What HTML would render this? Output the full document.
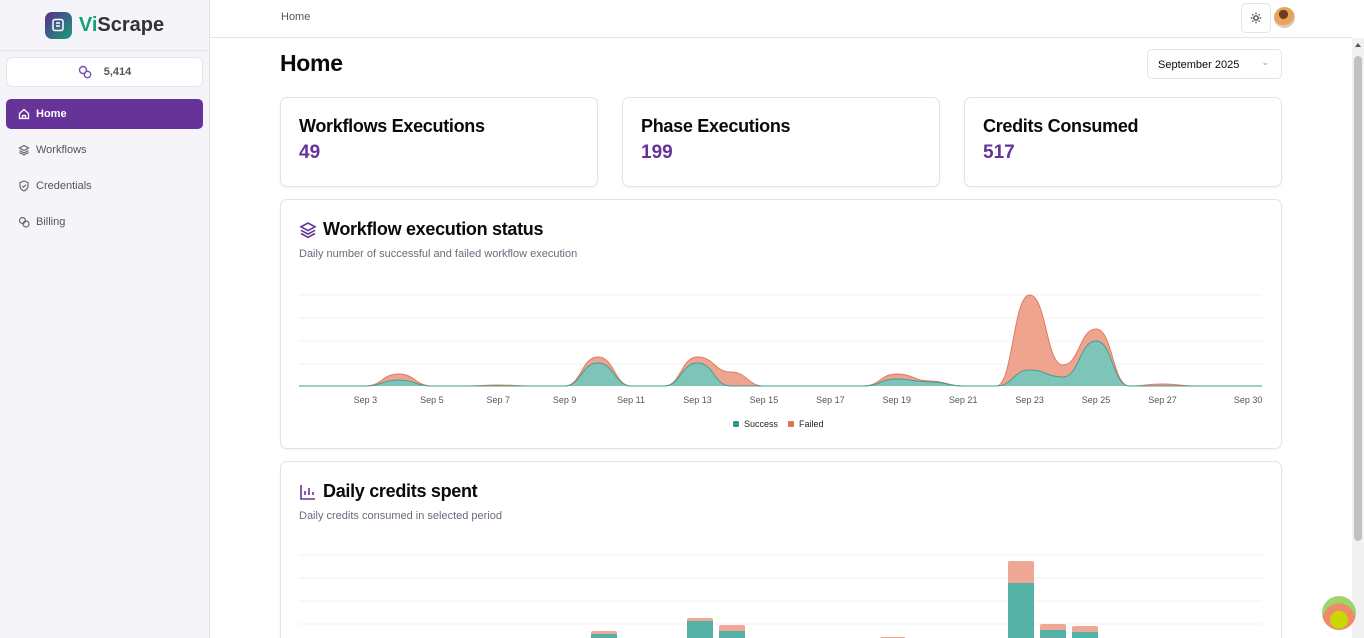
<!DOCTYPE html>
<html><head><meta charset="utf-8"><style>
*{box-sizing:border-box;margin:0;padding:0}
html,body{width:1364px;height:638px;overflow:hidden}
body{font-family:"Liberation Sans",sans-serif;background:#fff;position:relative;color:#0a0a0a}
.side{position:absolute;left:0;top:0;width:210px;height:638px;background:#f5f4f8;border-right:1px solid #e4e4e7}
.logo{height:51px;border-bottom:1px solid #e4e4e7;display:flex;align-items:center;justify-content:center;gap:7px}
.lbox{width:27px;height:27px;border-radius:7px;background:linear-gradient(135deg,#5b2c8f,#16a07a);display:flex;align-items:center;justify-content:center}
.ltxt{font-size:20px;font-weight:700;color:#333}.ltxt b{color:#16a07a}
.cred{margin:6px 6px 0 6px;height:30px;border:1px solid #e4e4e7;border-radius:6px;background:#fff;display:flex;align-items:center;justify-content:center;gap:12px;font-size:11px;font-weight:700;color:#555}
.nav{margin:12px 6px 0;height:30px;border-radius:5px;display:flex;align-items:center;padding-left:12px;gap:6px;font-size:11px;color:#555}
.nav.act{background:#663399;color:#fff;font-weight:700}
.hdr{position:absolute;left:210px;top:0;right:12px;height:38px;border-bottom:1px solid #e4e4e7}
.card{position:absolute;border:1px solid #e4e4e7;border-radius:7px;background:#fff;box-shadow:0 1px 2px rgba(0,0,0,.05)}
.st h3{font-size:18px;font-weight:700;margin:18px 0 0 18px;letter-spacing:-.3px}
.st div{font-size:19px;font-weight:700;color:#663399;margin:5px 0 0 18px}
.ct h2{font-size:18px;font-weight:700;margin:19px 0 0 18px;display:flex;align-items:center;gap:6px;letter-spacing:-.3px}
.ct p{font-size:11px;color:#6b6b7b;margin:8px 0 0 18px}
.sb{position:absolute;right:0;top:38px;width:12px;height:600px;background:#f1f1f1}
</style></head><body>
<div class="side">
 <div class="logo"><div class="lbox"><svg width="14" height="14" viewBox="0 0 14 14" fill="none" stroke="#fff" stroke-width="1.5"><rect x="2" y="1.5" width="10" height="11" rx="2"/><path d="M5 5h4M5 8h4"/></svg></div><div class="ltxt"><b>Vi</b>Scrape</div></div>
 <div class="cred"><svg width="14" height="14" viewBox="0 0 14 14" fill="none" stroke="#7a4fb5" stroke-width="1.4"><circle cx="5" cy="5" r="3.5"/><circle cx="9.5" cy="9.5" r="3.2"/></svg>5,414</div>
 <div class="nav act" style="margin-top:12px"><svg width="12" height="12" viewBox="0 0 12 12" fill="none" stroke="#fff" stroke-width="1.3"><path d="M1.5 5.5L6 1.5l4.5 4V10.5h-9z M4.5 10.5V7.5h3v3"/></svg>Home</div>
 <div class="nav" style="margin-top:6px"><svg width="12" height="12" viewBox="0 0 12 12" fill="none" stroke="#666" stroke-width="1.2"><path d="M6 1.5l4.5 2.5L6 6.5 1.5 4z M1.5 6.5L6 9l4.5-2.5M1.5 8.5L6 11l4.5-2.5"/></svg>Workflows</div>
 <div class="nav" style="margin-top:6px"><svg width="12" height="12" viewBox="0 0 12 12" fill="none" stroke="#666" stroke-width="1.2"><path d="M6 1l4 1.5v3.5c0 2.5-2 4-4 5-2-1-4-2.5-4-5V2.5z M4.3 6l1.2 1.2L8 4.8"/></svg>Credentials</div>
 <div class="nav" style="margin-top:6px"><svg width="12" height="12" viewBox="0 0 12 12" fill="none" stroke="#666" stroke-width="1.2"><circle cx="4.5" cy="4.5" r="3"/><circle cx="8" cy="8" r="3"/></svg>Billing</div>
</div>
<div class="hdr">
 <div style="position:absolute;left:71px;top:11px;font-size:11px;color:#555">Home</div>
 <div style="position:absolute;left:1031px;top:3px;width:30px;height:30px;border:1px solid #e4e4e7;border-radius:5px;display:flex;align-items:center;justify-content:center"><svg width="12" height="12" viewBox="0 0 12 12" fill="none" stroke="#333" stroke-width="1.2"><circle cx="6" cy="6" r="2.2"/><path d="M6 .8v1.5M6 9.7v1.5M.8 6h1.5M9.7 6h1.5M2.3 2.3l1 1M8.7 8.7l1 1M2.3 9.7l1-1M8.7 3.3l1-1"/></svg></div>
 <div style="position:absolute;left:1064px;top:7px;width:21px;height:21px;border-radius:50%;background:radial-gradient(circle at 45% 35%,#6b3d22 0 25%,#e8a45a 26% 60%,#d9cbb8 61%)"></div>
</div>
<div style="position:absolute;left:280px;top:50px;font-size:23px;font-weight:700;letter-spacing:-.3px">Home</div>
<div style="position:absolute;left:1147px;top:49px;width:135px;height:30px;border:1px solid #e4e4e7;border-radius:5px;font-size:11px;padding:9px 0 0 10px">September 2025<span style="position:absolute;right:12px;top:7px;color:#999;font-size:9px">&#8964;</span></div>
<div class="card st" style="left:280px;top:97px;width:318px;height:90px"><h3>Workflows Executions</h3><div>49</div></div>
<div class="card st" style="left:622px;top:97px;width:318px;height:90px"><h3>Phase Executions</h3><div>199</div></div>
<div class="card st" style="left:964px;top:97px;width:318px;height:90px"><h3>Credits Consumed</h3><div>517</div></div>
<div class="card ct" style="left:280px;top:199px;width:1002px;height:250px"><h2><svg width="18" height="18" viewBox="0 0 18 18" fill="none" stroke="#663399" stroke-width="1.6"><path d="M9 2l7 3.8L9 9.6 2 5.8z M2 9.3l7 3.8 7-3.8M2 12.5l7 3.8 7-3.8"/></svg>Workflow execution status</h2><p>Daily number of successful and failed workflow execution</p></div>
<div class="card ct" style="left:280px;top:461px;width:1002px;height:190px"><h2><svg width="18" height="18" viewBox="0 0 18 18" fill="none" stroke="#663399" stroke-width="1.6"><path d="M2 2v14h14M6 12V8M10 12V5M14 12V9"/></svg>Daily credits spent</h2><p>Daily credits consumed in selected period</p></div>
<svg id="ch" style="position:absolute;left:0;top:0" width="1364" height="638"></svg>
<div style="position:absolute;left:733px;top:419px;font-size:9px;color:#222;display:flex;gap:10px"><span><i style="display:inline-block;width:6px;height:6px;background:#2a9d8f;border-radius:1px;margin-right:5px"></i>Success</span><span><i style="display:inline-block;width:6px;height:6px;background:#e76f51;border-radius:1px;margin-right:5px"></i>Failed</span></div>
<div class="sb"><div style="position:absolute;left:2px;top:18px;width:8px;height:485px;background:#c1c1c1;border-radius:4px"></div><div style="position:absolute;left:3px;top:5px;border:3px solid transparent;border-bottom:4px solid #555;border-top:0"></div></div>
<div style="position:absolute;left:1322px;top:596px;width:34px;height:34px;border-radius:50%;background:radial-gradient(circle at 50% 70%,#c8d800 0 30%,#f08a6a 31% 55%,#9fd36b 56%)"></div>
<script>
var T=[0,0,0,12,0,0,1,0,0,29,0,0,29,14,0,0,0,0,12,5,0,0,91,21,57,0,2,0,0,0];
var S=[0,0,0,6,0,0,0,0,0,23,0,0,23,0,0,0,0,0,7,4,0,0,16,9,45,0,0,0,0,0];
function X(i){return 299+i*33.21}
function line(a){var d="M"+X(0)+","+(386-a[0]);for(var i=1;i<a.length;i++){var h=16.6;d+=" C"+(X(i-1)+h)+","+(386-a[i-1])+" "+(X(i)-h)+","+(386-a[i])+" "+X(i)+","+(386-a[i]);}return d}
var s="";
[295,318,341,364].forEach(function(y){s+='<line x1="299" x2="1262" y1="'+y+'" y2="'+y+'" stroke="#f1f1f3"/>'});
[555,578,601,624].forEach(function(y){s+='<line x1="299" x2="1262" y1="'+y+'" y2="'+y+'" stroke="#f1f1f3"/>'});
var lt=line(T),ls=line(S);
s+='<path d="'+lt+' L1262,386 L299,386Z" fill="#eea48f"/><path d="'+lt+'" fill="none" stroke="#e07a60" stroke-width="1"/>';
s+='<path d="'+ls+' L1262,386 L299,386Z" fill="#7fc4b9"/><path d="'+ls+'" fill="none" stroke="#3f9f92" stroke-width="1"/>';
var lab=[3,5,7,9,11,13,15,17,19,21,23,25,27,30];
lab.forEach(function(d){var x=X(d-1);if(d==30)x-=14;s+='<text x="'+x+'" y="403" font-size="9" fill="#555" text-anchor="middle" font-family="Liberation Sans">Sep '+d+'</text>'});
var B=[[604,631,634],[700,618,621],[732,625,631],[893,637,640],[1021,561,583],[1053,624,630],[1085,626,632]];
B.forEach(function(b){s+='<rect x="'+(b[0]-13)+'" y="'+b[1]+'" width="26" height="'+(660-b[1])+'" rx="2" fill="#f0a896"/><rect x="'+(b[0]-13)+'" y="'+b[2]+'" width="26" height="'+(660-b[2])+'" fill="#54b1a5"/>'});
document.getElementById("ch").innerHTML=s;
</script>
</body></html>
